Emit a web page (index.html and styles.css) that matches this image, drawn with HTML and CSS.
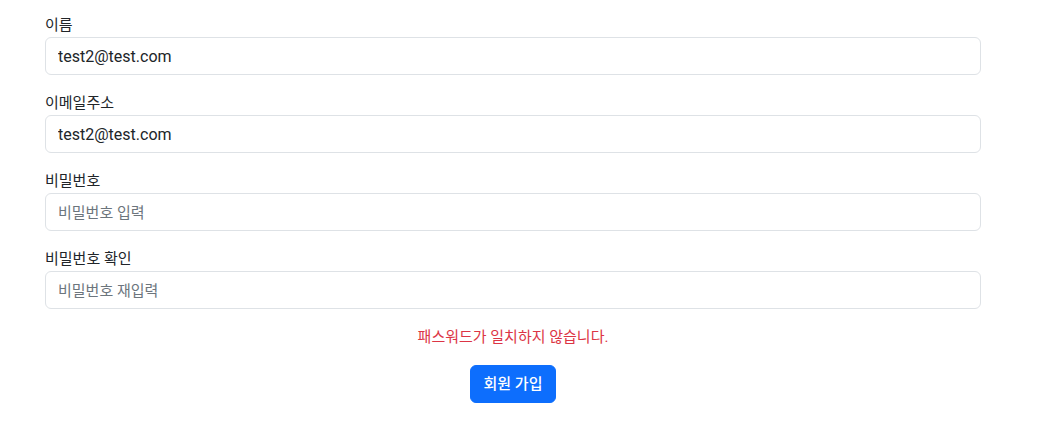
FILE: index.html
```html
<!DOCTYPE html>
<html lang="ko">
<head>
<meta charset="utf-8">
<title>회원 가입</title>
<link rel="stylesheet" href="styles.css">
</head>
<body>
<form class="signup">
  <div class="field">
    <label class="label" for="name">이름</label>
    <input class="input" id="name" type="text" value="test2@test.com">
  </div>
  <div class="field">
    <label class="label" for="email">이메일주소</label>
    <input class="input" id="email" type="text" value="test2@test.com">
  </div>
  <div class="field">
    <label class="label" for="pw">비밀번호</label>
    <input class="input" id="pw" type="password" placeholder="비밀번호 입력">
  </div>
  <div class="field">
    <label class="label" for="pw2">비밀번호 확인</label>
    <input class="input" id="pw2" type="password" placeholder="비밀번호 재입력">
  </div>
  <p class="error">패스워드가 일치하지 않습니다.</p>
  <div class="actions">
    <button class="btn" type="submit">회원 가입</button>
  </div>
</form>
</body>
</html>
```
FILE: styles.css
```css
* { box-sizing: border-box; }
html, body { margin: 0; background: #fff; }
body {
  font-family: "Roboto", "Noto Sans CJK KR", sans-serif;
  font-size: 16px;
  line-height: 1.5;
  color: #212529;
}
.signup {
  width: 936px;
  margin: 13px 0 0 45px;
}
.field {
  display: flex;
  flex-direction: column;
  align-items: flex-start;
  margin-bottom: 16px;
}
.label {
  font-size: 15px;
  line-height: 24px;
  font-weight: 400;
}
.input {
  width: 100%;
  height: 38px;
  padding: 6px 12px;
  font: inherit;
  font-size: 16px;
  color: #212529;
  border: 1px solid #dee2e6;
  border-radius: 6px;
  background: #fff;
  outline: none;
}
.input::placeholder { color: #6c757d; font-size: 15px; }
.error {
  margin: 0 0 16px;
  text-align: center;
  color: #dc3545;
  font-size: 15px;
  line-height: 24px;
}
.actions { display: flex; justify-content: center; }
.btn {
  height: 38px;
  padding: 6px 13px;
  font: inherit;
  font-size: 15px;
  font-weight: 500;
  color: #fff;
  background: #0d6efd;
  border: 1px solid #0d6efd;
  border-radius: 6px;
}
```
